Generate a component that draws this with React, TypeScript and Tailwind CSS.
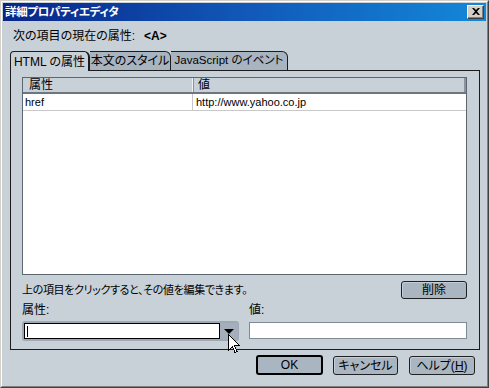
export default function App() {
  const font =
    "font-['Liberation_Sans','Noto_Sans_CJK_JP',sans-serif] [font-feature-settings:'palt']";
  const btn =
    "flex items-center justify-center rounded-[3px] border border-[#202020] bg-[#a9b5c1] shadow-[inset_1px_1px_0_#c4ced8]";
  return (
    <div
      className={`relative w-[489px] h-[388px] bg-[#c8d0d8] text-black text-[11px] ${font} border border-t-[#d4d0c8] border-l-[#d4d0c8] border-r-[#404040] border-b-[#404040]`}
    >
      <div className="h-full w-full border border-t-white border-l-white border-r-[#808080] border-b-[#808080] p-[1px] flex flex-col">
        {/* Title bar */}
        <div className="h-[18px] flex items-center justify-between pl-[2px] pr-[2px] bg-linear-to-r from-[#0a2488] via-[#1258b8] to-[#1488d8]">
          <span className="text-white font-bold text-[11.5px] leading-[18px] tracking-[-0.3px]">
            詳細プロパティエディタ
          </span>
          <div className="w-[17px] h-[14px] bg-[#d4d0c8] border border-t-white border-l-white border-r-[#404040] border-b-[#404040] shadow-[inset_-1px_-1px_0_#808080] flex items-center justify-center">
            <svg width="8" height="7" viewBox="0 0 8 7" className="-mt-[1px]">
              <path d="M0 0h2l2 2 2-2h2L5 3.5 8 7H6L4 5 2 7H0l3-3.5z" fill="#000" />
            </svg>
          </div>
        </div>

        {/* Current element label */}
        <div className="mt-[8px] h-[14px] leading-[14px] pl-[10px] flex items-center text-[12px]">
          <span>次の項目の現在の属性:</span>
          <span className="ml-[9px] font-bold">&lt;A&gt;</span>
        </div>

        {/* Tabs */}
        <div className="mt-[8px] h-[20px] -mb-[1px] pl-[7px] flex relative z-10">
          <div className="w-[80px] h-[20px] border-l border-t border-r-2 border-[#1c1c1c] rounded-tl-[4px] rounded-tr-[6px] bg-[#c8d0d8] flex items-center justify-center text-[12px]">
            HTML の属性
          </div>
          <div className="w-[81px] h-[20px] border-t border-r border-b border-[#1c1c1c] rounded-tr-[6px] bg-[#a8b4c0] flex items-center justify-center text-[12px]">
            本文のスタイル
          </div>
          <div className="w-[117px] h-[20px] border-t border-r border-b border-[#1c1c1c] rounded-tr-[6px] bg-[#a8b4c0] flex items-center justify-center text-[11.5px]">
            JavaScript のイベント
          </div>
        </div>

        {/* Panel */}
        <div className="ml-[7px] w-[470px] h-[280px] border border-[#1c1c1c] pl-[11px] pr-[12px] pt-[6px] flex flex-col">
          {/* Table */}
          <div className="h-[198px] border border-[#5c6670] bg-white flex flex-col">
            <div className="flex h-[16px] bg-[#c8d0d8] border-b-2 border-[#6c7680] text-[12px] leading-[14px]">
              <div className="w-[170px] pl-[6px] border-r border-[#eef2f6]">属性</div>
              <div className="flex-1 pl-[4px] border-l border-[#8a949e] border-r-2">値</div>
            </div>
            <div className="flex h-[17px] border-b border-[#c8c8c8] leading-[16px]">
              <div className="w-[170px] pl-[2px] border-r border-[#c8c8c8]">href</div>
              <div className="flex-1 pl-[3px]">http://www.yahoo.co.jp</div>
            </div>
          </div>

          {/* Hint + delete */}
          <div className="mt-[6px] h-[18px] flex items-center justify-between">
            <span className="text-[11px] tracking-[-0.35px]">上の項目をクリックすると、その値を編集できます。</span>
            <div className={`${btn} w-[66px] h-[18px] text-[12px]`}>削除</div>
          </div>

          {/* Attribute / value inputs */}
          <div className="mt-[3px] flex gap-[10px]">
            <div className="w-[217px] flex flex-col">
              <div className="h-[16px] leading-[16px] text-[12px]">属性:</div>
              <div className="mt-[3px] h-[20px] rounded-[3px] bg-[#9ea9b5] p-[2px] pr-[1px] flex">
                <div className="flex-1 bg-white border border-black flex items-center pl-[2px]">
                  <div className="w-[1px] h-[11px] bg-black" />
                </div>
                <div className="w-[18px] flex items-center justify-center bg-[#a4afbb]">
                  <svg width="10" height="5" viewBox="0 0 10 5">
                    <path d="M0 0h10L5 5z" fill="#000" />
                  </svg>
                </div>
              </div>
            </div>
            <div className="flex-1 flex flex-col">
              <div className="h-[16px] leading-[16px] text-[12px]">値:</div>
              <div className="mt-[4px] h-[17px] bg-white border border-[#7e8a96]" />
            </div>
          </div>
        </div>

        {/* Bottom buttons */}
        <div className="mt-[5px] flex items-start justify-end pr-[11px] text-[12px]">
          <div className="w-[67px] h-[20px] flex items-center justify-center rounded-[3px] border-2 border-black bg-[#a9b5c1]">
            OK
          </div>
          <div className={`${btn} ml-[10px] mt-[1px] w-[65px] h-[19px]`}>キャンセル</div>
          <div className={`${btn} ml-[11px] mt-[1px] w-[66px] h-[19px]`}>
            ヘルプ(<span className="underline">H</span>)
          </div>
        </div>
      </div>

      {/* Mouse cursor */}
      <svg
        className="absolute left-[227px] top-[333px]"
        width="12"
        height="19"
        viewBox="0 0 12 19"
        shapeRendering="crispEdges"
      >
        <path
          d="M0.5 0.5 L0.5 16.5 L4.5 12.5 L7 18.5 L9 17.5 L6.5 11.5 L11.5 11.5 Z"
          fill="#fff"
          stroke="#000"
          strokeWidth="1"
        />
      </svg>
    </div>
  );
}
